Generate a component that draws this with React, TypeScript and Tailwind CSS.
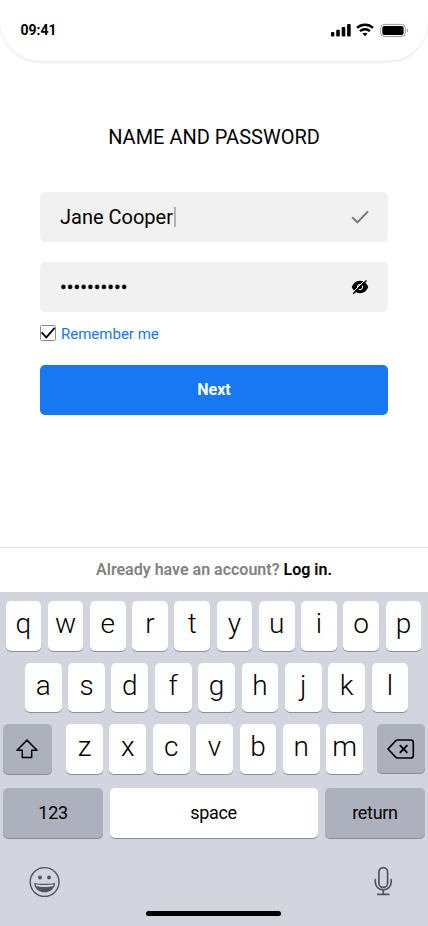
import React from 'react';

function StatusBar() {
  return (
    <header className="flex h-[61px] items-center justify-between rounded-b-[40px] bg-white pl-[20.5px] pr-[19px] pb-px shadow-[0_1px_3px_rgba(0,0,0,0.12)]">
      <span className="text-[14px] font-bold leading-5">09:41</span>
      <svg width="78" height="16" viewBox="0 0 78 16" fill="none">
        <rect x="0" y="10" width="3.4" height="4.6" rx="1" fill="#000" />
        <rect x="5.2" y="7.7" width="3.6" height="6.9" rx="1" fill="#000" />
        <rect x="10.7" y="5" width="3.6" height="9.6" rx="1" fill="#000" />
        <rect x="16.1" y="2" width="3.6" height="12.6" rx="1" fill="#000" />
        <path d="M26 5.9a11.8 11.8 0 0 1 16 0" stroke="#000" strokeWidth="2.5" />
        <path d="M29 9.2a7.4 7.4 0 0 1 10 0" stroke="#000" strokeWidth="2.4" />
        <path d="M31.5 11.7a3.9 3.9 0 0 1 5 0L34 14.3z" fill="#000" />
        <rect x="49.7" y="2.4" width="24.6" height="12.1" rx="3.6" stroke="#000" strokeOpacity="0.4" />
        <rect x="51.3" y="4" width="21.3" height="9" rx="2" fill="#000" />
        <path d="M75.8 6.4a2.4 2.4 0 0 1 0 4.2z" fill="#000" fillOpacity="0.4" />
      </svg>
    </header>
  );
}

function LetterKey({ label, narrow }: { label: string; narrow?: boolean }) {
  return (
    <button
      className={`${
        narrow ? 'w-[35.7px]' : 'w-[36.8px]'
      } flex h-[49.5px] items-center justify-center rounded-[5px] bg-white pb-[3px] text-[28px] font-light leading-none shadow-[0_1px_0.5px_#8c8e93]`}
    >
      {label}
    </button>
  );
}

function ActionKey({ className, children }: { className: string; children: React.ReactNode }) {
  return (
    <button
      className={`${className} flex items-center justify-center rounded-[5px] text-[18px] leading-none tracking-[-0.3px] shadow-[0_1px_0.5px_#8c8e93]`}
    >
      {children}
    </button>
  );
}

function Keyboard() {
  return (
    <section className="flex h-[334px] flex-col bg-[#d2d5dd] pt-[9px]">
      <div className="flex justify-between pl-[5.5px] pr-[6.7px]">
        {[...'qwertyuiop'].map((k) => (
          <LetterKey key={k} label={k} narrow />
        ))}
      </div>
      <div className="mt-3 flex justify-between pl-[24.8px] pr-[19.6px]">
        {[...'asdfghjkl'].map((k) => (
          <LetterKey key={k} label={k} />
        ))}
      </div>
      <div className="mt-3 flex items-start justify-between pl-[3.4px] pr-[3.4px]">
        <ActionKey className="h-[50px] w-[48.2px] bg-[#adb1bd]">
          <svg width="22" height="20" viewBox="0 0 22 20" fill="none" stroke="#000" strokeWidth="1.5" strokeLinejoin="round">
            <path d="M11 1.1 1 11.2h5.3v7.2h9.4v-7.2H21z" />
          </svg>
        </ActionKey>
        <div className="ml-[1px] flex w-[297px] justify-between">
          {[...'zxcvbnm'].map((k) => (
            <LetterKey key={k} label={k} />
          ))}
        </div>
        <ActionKey className="h-[49px] w-[48px] bg-[#adb1bd]">
          <svg width="28" height="20" viewBox="0 0 28 20" fill="none" stroke="#000" strokeWidth="1.6" strokeLinejoin="round">
            <path d="M10.3 1h13.4a2.6 2.6 0 0 1 2.6 2.6v12.8a2.6 2.6 0 0 1-2.6 2.6H10.3a2 2 0 0 1-1.4-.6L1 10l7.9-8.4a2 2 0 0 1 1.4-.6z" />
            <path d="m12.8 6.2 7.6 7.6m0-7.6-7.6 7.6" strokeWidth="1.9" />
          </svg>
        </ActionKey>
      </div>
      <div className="mt-[14px] flex justify-between pl-[3.4px] pr-[3.4px]">
        <ActionKey className="h-[49.5px] w-[99.3px] bg-[#adb1bd]">123</ActionKey>
        <ActionKey className="mr-[1px] h-[49.5px] w-[208px] bg-white">space</ActionKey>
        <ActionKey className="h-[49.5px] w-[99.3px] bg-[#adb1bd]">return</ActionKey>
      </div>
      <div className="mt-[28px] flex items-start justify-between pl-[29px] pr-[34px]">
        <svg width="32" height="32" viewBox="0 0 32 32" fill="none">
          <circle cx="15.6" cy="16" r="14.4" stroke="#50555c" strokeWidth="1.4" />
          <circle cx="11" cy="11.5" r="1.9" fill="#50555c" />
          <circle cx="20" cy="11.5" r="1.9" fill="#50555c" />
          <path d="M5.2 16.7c2.8 1.4 18 1.4 20.8 0 .3 5.2-4.5 9.6-10.4 9.6S4.9 21.9 5.2 16.7z" fill="#50555c" />
          <path d="M6.6 18.2c3.7 1.1 14.3 1.1 18 0-.2 1-.5 1.5-.9 2-3.600 1.100-12.600 1.100-16.200 0-.4-.5-.7-1-.9-2z" fill="#d2d5dd" />
        </svg>
        <svg width="20" height="32" viewBox="0 0 20 32" fill="none" stroke="#50555c" strokeWidth="1.7" strokeLinecap="round">
          <rect x="4.9" y="1.7" width="8.7" height="19.6" rx="4.35" />
          <path d="M1.3 13.500v2.600c0 4.700 3.500 7.700 7.950 7.700s7.950-3 7.950-7.700v-2.600M9.250 24v4.300M3.700 28.400h11.200" />
        </svg>
      </div>
      <div className="mr-[1px] mt-[13px] h-[5px] w-[135px] self-center rounded-full bg-black" />
    </section>
  );
}

export default function App() {
  return (
    <main className="flex h-[926px] w-[428px] flex-col overflow-hidden bg-white font-['Roboto',sans-serif] text-black">
      <StatusBar />
      <form className="flex flex-col px-10 pt-[64px]">
        <h1 className="text-center text-[20px] leading-6">NAME AND PASSWORD</h1>
        <div className="mt-[43px] flex h-[50px] items-center rounded-[5px] bg-[#f1f1f1] pl-5 pr-[19px]">
          <span className="text-[20px]">Jane Cooper</span>
          <span className="ml-[1px] h-5 w-[2px] bg-[#b3b3b3]" />
          <svg className="ml-auto" width="18" height="14" viewBox="0 0 18 14" fill="none" stroke="#7d7d7d" strokeWidth="2">
            <path d="m1.200 7.200 5.200 5.100L17 1.400" />
          </svg>
        </div>
        <div className="mt-5 flex h-[50px] items-center rounded-[5px] bg-[#f1f1f1] pl-5 pr-[19px]">
          <span className="text-[20px] [-webkit-text-stroke:0.3px_#000]">••••••••••</span>
          <svg className="ml-auto" width="18" height="16" viewBox="0 0 18 16" fill="none">
            <path d="M9 1.800c4.500 0 7 3.100 8.200 6.200-1.200 3.100-3.700 6.200-8.200 6.200S2 11.100.800 8C2 4.900 4.500 1.800 9 1.800z" fill="#000" />
            <circle cx="9" cy="8" r="2.700" stroke="#f1f1f1" strokeWidth="1" />
            <path d="M1.300 13.700 14.300.700" stroke="#f1f1f1" strokeWidth="1" />
            <path d="M2.200 14.800 15.500 1.500" stroke="#000" strokeWidth="1.500" />
          </svg>
        </div>
        <label className="mt-[13px] flex h-4 items-center">
          <svg width="16" height="16" viewBox="0 0 16 16" fill="none">
            <rect x=".5" y=".5" width="15" height="15" rx="1" stroke="#8c8c8c" />
            <path d="m1.600 7.400 4.700 4.900L14.600 2.800" stroke="#000" strokeWidth="1.800" />
          </svg>
          <span className="ml-[5px] mt-[1px] text-[15px] leading-4 text-[#1877f2]">Remember me</span>
        </label>
        <button type="button" className="mt-[24px] h-[50px] rounded-[5px] bg-[#1877f2] text-[16px] font-bold text-white">
          Next
        </button>
      </form>
      <footer className="mt-auto flex h-[45px] shrink-0 items-center justify-center gap-1 border-t border-[#e3e3e3] text-[16px] font-semibold">
        <span className="text-[#828282]">Already have an account?</span>
        <span>Log in.</span>
      </footer>
      <Keyboard />
    </main>
  );
}
